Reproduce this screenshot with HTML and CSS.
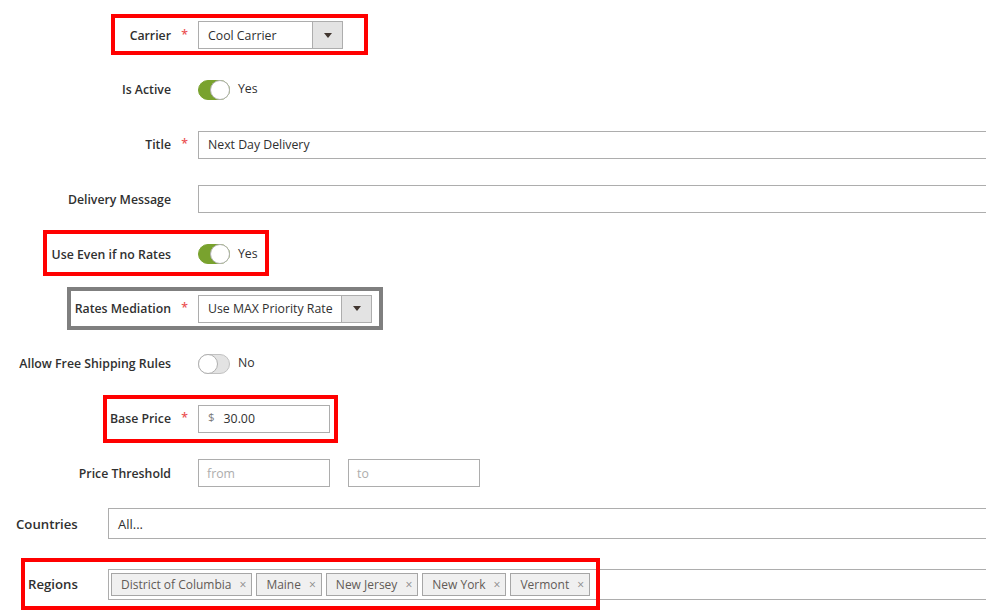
FILE: index.html
```html
<!DOCTYPE html>
<html>
<head>
<meta charset="utf-8">
<link rel="stylesheet" href="styles.css">
</head>
<body>
<div class="form">
  <div class="row">
    <div class="label">Carrier</div><div class="req">*</div>
    <div class="select w-carrier"><span class="sel-text">Cool Carrier</span><span class="sel-btn"><span class="tri"></span></span></div>
    <div class="hl red hl-carrier"></div>
  </div>
  <div class="row">
    <div class="label">Is Active</div><div class="req"></div>
    <div class="toggle on"><span class="knob"></span></div><span class="tlabel">Yes</span>
  </div>
  <div class="row">
    <div class="label">Title</div><div class="req">*</div>
    <div class="input wide">Next Day Delivery</div>
  </div>
  <div class="row">
    <div class="label">Delivery Message</div><div class="req"></div>
    <div class="input wide"></div>
  </div>
  <div class="row">
    <div class="label">Use Even if no Rates</div><div class="req"></div>
    <div class="toggle on"><span class="knob"></span></div><span class="tlabel">Yes</span>
    <div class="hl red hl-even"></div>
  </div>
  <div class="row">
    <div class="label">Rates Mediation</div><div class="req">*</div>
    <div class="select w-rates"><span class="sel-text">Use MAX Priority Rate</span><span class="sel-btn"><span class="tri"></span></span></div>
    <div class="hl gray hl-rates"></div>
  </div>
  <div class="row">
    <div class="label">Allow Free Shipping Rules</div><div class="req"></div>
    <div class="toggle off"><span class="knob"></span></div><span class="tlabel">No</span>
  </div>
  <div class="row">
    <div class="label">Base Price</div><div class="req">*</div>
    <div class="input short"><span class="cur">$</span>30.00</div>
    <div class="hl red hl-price"></div>
  </div>
  <div class="row">
    <div class="label">Price Threshold</div><div class="req"></div>
    <div class="input short ph">from</div>
    <div class="input short ph to">to</div>
  </div>
  <div class="row row-countries">
    <div class="label2 countries-label">Countries</div>
    <div class="input tall">All...</div>
  </div>
  <div class="row row-regions">
    <div class="label2 regions-label">Regions</div>
    <div class="multi">
      <span class="tag">District of Columbia<span class="x">×</span></span>
      <span class="tag">Maine<span class="x">×</span></span>
      <span class="tag">New Jersey<span class="x">×</span></span>
      <span class="tag">New York<span class="x">×</span></span>
      <span class="tag">Vermont<span class="x">×</span></span>
    </div>
    <div class="hl red hl-regions"></div>
  </div>
</div>
</body>
</html>
```
FILE: styles.css
```css
html, body {
  margin: 0;
  padding: 0;
  background: #ffffff;
}
body {
  width: 999px;
  height: 614px;
  overflow: hidden;
  font-family: "Open Sans", "DejaVu Sans", sans-serif;
  color: #303030;
}
.form {
  display: flex;
  flex-direction: column;
  gap: 26.8px;
  padding-top: 21px;
}
.row {
  position: relative;
  display: flex;
  align-items: center;
  height: 28px;
}
.label {
  width: 171px;
  text-align: right;
  font-size: 12.3px;
  font-weight: 600;
  color: #303030;
  white-space: nowrap;
}
.req {
  width: 27px;
  text-align: center;
  color: #eb5252;
  font-size: 12.3px;
  font-weight: 600;
  position: relative;
  top: -1px;
}
.select {
  box-sizing: border-box;
  height: 28px;
  border: 1px solid #adadad;
  display: flex;
  align-items: stretch;
  font-size: 12.3px;
}
.w-carrier { width: 145px; }
.w-rates { width: 174px; }
.sel-text {
  flex: 1;
  padding-left: 9px;
  display: flex;
  align-items: center;
  white-space: nowrap;
}
.sel-btn {
  width: 29px;
  background: #e3e3e3;
  border-left: 1px solid #adadad;
  display: flex;
  align-items: center;
  justify-content: center;
}
.tri {
  width: 0;
  height: 0;
  border-left: 4px solid transparent;
  border-right: 4px solid transparent;
  border-top: 5px solid #41362f;
}
.input {
  box-sizing: border-box;
  height: 28px;
  border: 1px solid #adadad;
  font-size: 12.3px;
  padding-left: 9px;
  display: flex;
  align-items: center;
  white-space: nowrap;
}
.wide {
  width: 788px;
  border-right: none;
}
.short {
  width: 132px;
}
.ph { color: #adadad; padding-left: 8px; }
.to { margin-left: 18px; }
.cur {
  color: #7a7a7a;
  font-size: 11.5px;
  margin-right: 9px;
  position: relative;
  top: -2px;
}
.toggle {
  box-sizing: border-box;
  width: 32px;
  height: 20px;
  border-radius: 10px;
  position: relative;
  border: 1px solid #adadad;
}
.toggle.on {
  background: #79a22e;
  border-color: #79a22e;
}
.toggle.off {
  background: #e3e3e3;
  border-color: #c2c2c2;
}
.knob {
  position: absolute;
  top: -1px;
  width: 18px;
  height: 18px;
  border-radius: 50%;
  background: #ffffff;
  border: 1px solid #b0b0b0;
}
.toggle.on .knob { right: -1px; }
.toggle.off .knob { left: -1px; }
.tlabel {
  margin-left: 8px;
  font-size: 12.3px;
  position: relative;
  top: -1px;
}
.row-countries {
  margin-top: -6px;
  height: 31px;
}
.row-regions {
  margin-top: 3px;
  height: 31px;
}
.label2 {
  font-size: 13.2px;
  font-weight: 600;
  white-space: nowrap;
}
.countries-label { width: 92px; padding-left: 16px; }
.regions-label { width: 80px; padding-left: 28px; }
.tall {
  height: 31px;
  width: 878px;
  border-right: none;
  padding-left: 9px;
  font-size: 13px;
}
.multi {
  box-sizing: border-box;
  height: 31px;
  width: 878px;
  border: 1px solid #adadad;
  border-right: none;
  display: flex;
  align-items: center;
  padding-left: 2px;
  gap: 4px;
}
.tag {
  box-sizing: border-box;
  height: 23px;
  display: inline-flex;
  align-items: center;
  background: #f0f0f0;
  border: 1px solid #a6a6a6;
  color: #625b57;
  font-size: 12px;
  padding: 0 5px 0 9px;
  white-space: nowrap;
}
.x {
  margin-left: 8px;
  color: #8a8a8a;
  font-size: 12px;
}
.hl {
  position: absolute;
  box-sizing: border-box;
  border: 4px solid #ff0000;
  pointer-events: none;
}
.hl.gray { border-color: #7f7f7f; }
.hl-carrier { left: 111px; top: -7px; width: 257px; height: 41px; }
.hl-even { left: 43px; top: -10px; width: 226px; height: 46px; }
.hl-rates { left: 67px; top: -8px; width: 316px; height: 43px; }
.hl-price { left: 103px; top: -10px; width: 235px; height: 48px; }
.hl-regions { left: 21px; top: -11px; width: 579px; height: 52px; }
```
